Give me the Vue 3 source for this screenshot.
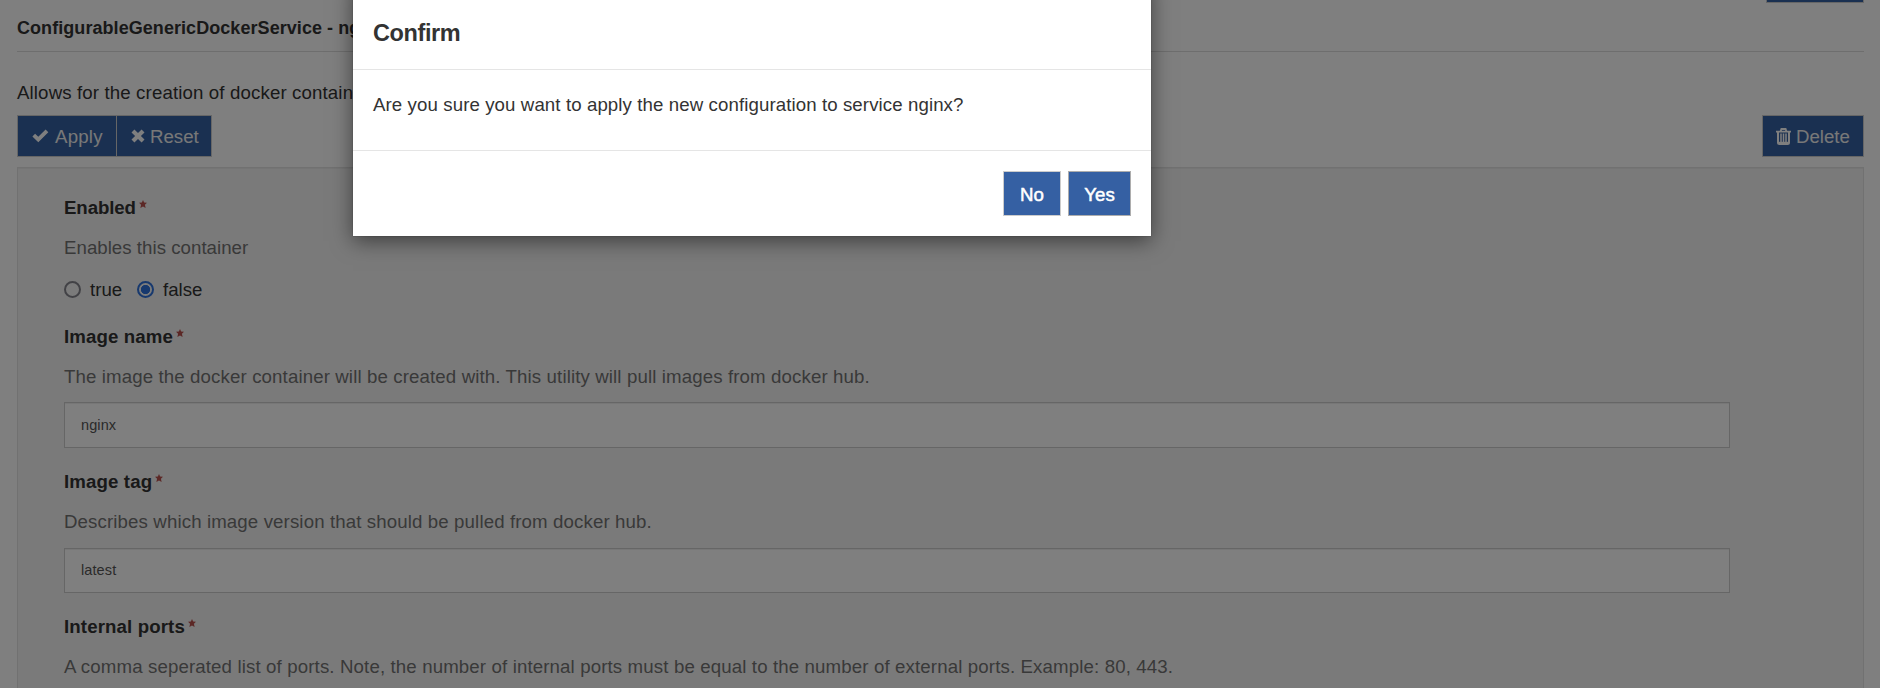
<script setup>
const fields = [
  { key: 'enabled', label: 'Enabled', help: 'Enables this container', type: 'radio' },
  { key: 'image', label: 'Image name', help: 'The image the docker container will be created with. This utility will pull images from docker hub.', type: 'text', value: 'nginx' },
  { key: 'tag', label: 'Image tag', help: 'Describes which image version that should be pulled from docker hub.', type: 'text', value: 'latest' },
  { key: 'ports', label: 'Internal ports', help: 'A comma seperated list of ports. Note, the number of internal ports must be equal to the number of external ports. Example: 80, 443.', type: 'none' }
]
</script>

<template>
  <div class="screen">
    <main class="page">
      <div class="top-action"></div>
      <header class="title">ConfigurableGenericDockerService - nginx</header>
      <p class="intro">Allows for the creation of docker containers.</p>
      <div class="toolbar">
        <div class="group">
          <button class="btn apply">
            <svg width="17" height="14" viewBox="0 0 17 14"><path d="M.4 7.4 3.1 4.7 6.3 7.8 13.6.6 16.3 3.3 6.3 13.2Z" fill="#fff" /></svg>
            <span>Apply</span>
          </button>
          <button class="btn reset">
            <svg width="14" height="14" viewBox="0 0 14 14"><path d="M3.4.5 7 4.1 10.6.5 13.5 3.4 9.9 7 13.5 10.6 10.6 13.5 7 9.9 3.4 13.5.5 10.6 4.1 7 .5 3.4Z" fill="#fff" /></svg>
            <span>Reset</span>
          </button>
        </div>
        <button class="btn delete">
          <svg width="15" height="17" viewBox="0 0 15 17" fill="none" stroke="#fff"><path d="M0 3.7H15M4.6 3.4 5.4 1H9.6L10.4 3.4" stroke-width="1.8" /><path d="M2 4V14.5Q2 16 3.5 16H11.5Q13 16 13 14.5V4" stroke-width="2" /><path d="M5 5.5V14M7.5 5.5V14M10 5.5V14" stroke-width="1.5" /><path d="M3 14.8H12" stroke-width="2" /></svg>
          <span>Delete</span>
        </button>
      </div>
      <section class="panel">
        <div v-for="f in fields" :key="f.key" class="field" :class="f.key">
          <div class="label"><span>{{ f.label }}</span><svg class="star" width="8" height="8" viewBox="0 0 7 7"><path d="M3.5 0 4.5 2.2 7 2.4 5.2 4.2 5.8 6.9 3.5 5.6 1.2 6.9 1.8 4.2 0 2.4 2.5 2.2Z" fill="#b9504d" /></svg></div>
          <p class="help">{{ f.help }}</p>
          <div v-if="f.type === 'radio'" class="radios">
            <i class="dot"></i><span class="t">true</span>
            <i class="dot on"></i><span>false</span>
          </div>
          <div v-else-if="f.type === 'text'" class="input">{{ f.value }}</div>
        </div>
      </section>
    </main>
    <div class="backdrop"></div>
    <div class="modal">
      <h4 class="modal-head">Confirm</h4>
      <div class="modal-body">Are you sure you want to apply the new configuration to service nginx?</div>
      <div class="modal-foot">
        <button class="mbtn no">No</button>
        <button class="mbtn yes">Yes</button>
      </div>
    </div>
  </div>
</template>

<style>
body { margin: 0; overflow: hidden; }
</style>

<style scoped>
* { box-sizing: border-box; }
.screen {
  position: relative;
  height: 688px;
  overflow: hidden;
  background: #fff;
  font-family: "Liberation Sans", Arial, sans-serif;
  font-size: 18.67px;
  line-height: 28px;
  color: #333;
}
.page { padding: 0 16px 0 17px; display: flex; flex-direction: column; }
p, h4 { margin: 0; }
button { font-family: inherit; margin: 0; }
.top-action {
  align-self: flex-end;
  width: 98px;
  height: 3px;
  background: #3560a3;
  border: 1px solid #ccc;
  border-top: 0;
}
.title {
  height: 49px;
  padding-top: 11px;
  font-weight: 700;
  font-size: 18px;
  letter-spacing: .06px;
  white-space: nowrap;
  border-bottom: 1px solid #ddd;
}
.intro { margin-top: 27px; height: 36px; letter-spacing: .13px; }
.toolbar { display: flex; justify-content: space-between; height: 42px; }
.group { display: flex; }
.btn {
  height: 42px;
  border: 1px solid #ccc;
  background: #3560a3;
  color: #f0f0f0;
  font-size: 18.67px;
  display: flex;
  align-items: center;
  padding: 0 0 0 14px;
}
.btn svg { flex: none; }
.btn span { padding-top: 2px; }
.apply { width: 100px; gap: 6px; letter-spacing: .2px; }
.reset { width: 96px; margin-left: -1px; gap: 5px; padding-left: 14px; }
.delete { width: 102px; padding-left: 13px; gap: 5px; }
.panel {
  margin-top: 10px;
  height: 560px;
  padding: 26px 133px 0 46px;
  background: #f5f5f5;
  border: 1px solid #e3e3e3;
  box-shadow: inset 0 1px 1px rgba(0, 0, 0, .05);
}
.field { height: 145px; }
.enabled { height: 129px; }
.label { height: 40px; display: flex; font-weight: 700; letter-spacing: .12px; }
.enabled .label { letter-spacing: -.1px; }
.star { margin: 6px 0 0 3px; }
.help { height: 40px; color: #737373; white-space: nowrap; letter-spacing: .12px; }
.image .help { height: 39px; }
.enabled .help { letter-spacing: .03px; }
.ports .help { letter-spacing: .13px; }
.radios { display: flex; height: 28px; margin-top: 2px; align-items: center; }
.dot {
  width: 17px;
  height: 17px;
  margin: -1px 9px 0 0;
  border: 2px solid #85858d;
  border-radius: 50%;
  background: #f7f7f7;
}
.dot.on { border-color: #2f72dd; background: radial-gradient(circle, #2f72dd 4.3px, #f7f7f7 5px); }
.t { width: 47px; }
.input {
  height: 46px;
  padding-left: 16px;
  border: 1px solid #ccc;
  box-shadow: inset 0 1px 1px rgba(0, 0, 0, .075);
  background: #fff;
  color: #555;
  font-size: 14.5px;
  letter-spacing: .1px;
  line-height: 44px;
}
.tag .input { height: 45px; line-height: 43px; }
.backdrop { position: absolute; inset: 0; background: rgba(0, 0, 0, .5); }
.modal {
  position: absolute;
  left: 353px;
  top: -20px;
  width: 798px;
  height: 256px;
  padding-top: 20px;
  background: #fff;
  box-shadow: 0 5px 20px rgba(0, 0, 0, .5), 0 0 1px rgba(0, 0, 0, .4);
}
.modal-head {
  height: 70px;
  padding: 19px 20px 0;
  font-size: 23.5px;
  letter-spacing: -.4px;
  font-weight: 700;
  border-bottom: 1px solid #e5e5e5;
}
.modal-body { height: 81px; padding: 21px 20px 0; border-bottom: 1px solid #e5e5e5; letter-spacing: .095px; }
.modal-foot { display: flex; justify-content: flex-end; gap: 7px; padding: 20px 20px 0; }
.mbtn {
  height: 45px;
  padding: 2px 0 0;
  border: 1px solid #ccc;
  background: #3560a3;
  color: #fff;
  font-size: 18.67px;
  -webkit-text-stroke: .5px #fff;
}
.no { width: 58px; }
.yes { width: 63px; border-color: #adadad; }
</style>
